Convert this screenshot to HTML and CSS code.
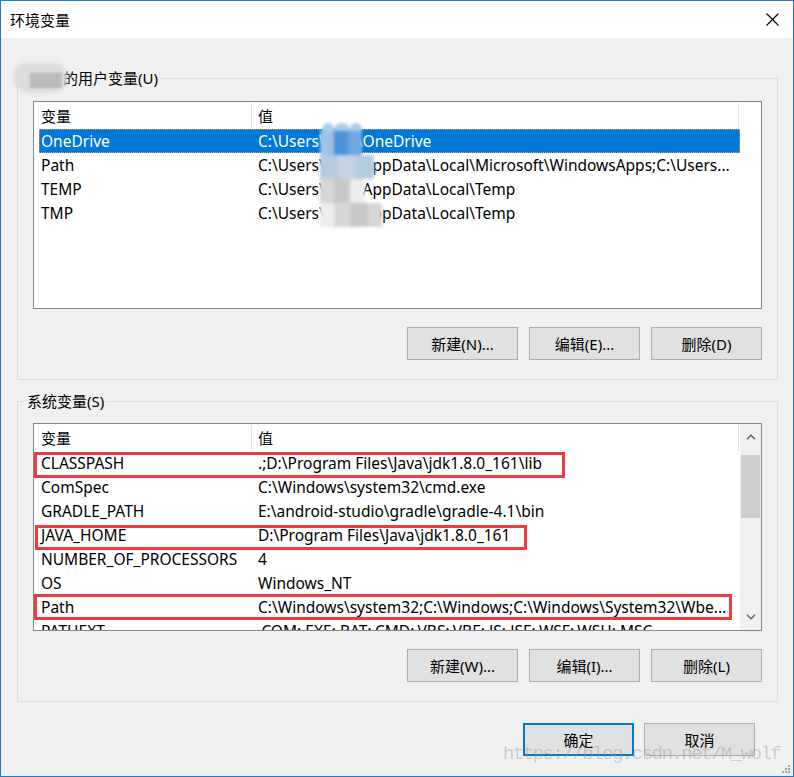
FILE: index.html
```html
<!DOCTYPE html>
<html lang="zh-CN">
<head>
<meta charset="utf-8">
<title>环境变量</title>
<link rel="stylesheet" href="styles.css">
</head>
<body>
<div class="window">
  <div class="titlebar">
    <span class="title">环境变量</span>
    <span class="close"><svg width="13" height="13" viewBox="0 0 13 13"><path d="M0.5 0.5 L12.5 12.5 M12.5 0.5 L0.5 12.5" stroke="#000" stroke-width="1.1" fill="none"/></svg></span>
  </div>
  <div class="content">
    <section class="group group-user">
      <div class="group-label"><span class="masked"></span>的用户变量(U)</div>
      <div class="list">
        <div class="list-main">
          <div class="list-head"><span class="hc hc1">变量</span><span class="hc hc2">值</span></div>
          <div class="row selected"><span class="c1">OneDrive</span><span class="c2">C:\Users\<span class="user"></span>\OneDrive</span></div>
          <div class="row"><span class="c1">Path</span><span class="c2">C:\Users\<span class="user"></span>\AppData\Local\Microsoft\WindowsApps;C:\Users...</span></div>
          <div class="row"><span class="c1">TEMP</span><span class="c2">C:\Users\<span class="user"></span>\AppData\Local\Temp</span></div>
          <div class="row"><span class="c1">TMP</span><span class="c2">C:\Users\<span class="user"></span>\AppData\Local\Temp</span></div>
        </div>
        <div class="noscroll"></div>
        <div class="mosaic">
          <div class="mz-row mz0"><i class="w4"></i><i class="w12 cA"></i><i class="w16 cA"></i><i class="w12 cA"></i></div>
          <div class="mz-row mz1"><i class="w2"></i><i class="w14 cD"></i><i class="w14 cB"></i><i class="w14 cC"></i></div>
          <div class="mz-row"><i class="w2"></i><i class="w18 cE"></i><i class="w18 cF"></i><i class="w18 cE"></i></div>
          <div class="mz-row"><i class="w2"></i><i class="w14 cH"></i><i class="w16 cG"></i><i class="w15 cW"></i></div>
          <div class="mz-row"><i class="w2"></i><i class="w14 cW"></i><i class="w16 cH"></i><i class="w18 cG"></i><i class="w14 cH"></i></div>
        </div>
      </div>
      <div class="btns">
        <button class="btn">新建(N)...</button>
        <button class="btn">编辑(E)...</button>
        <button class="btn">删除(D)</button>
      </div>
    </section>
    <section class="group group-sys">
      <div class="group-label">系统变量(S)</div>
      <div class="list">
        <div class="list-main">
          <div class="list-head"><span class="hc hc1">变量</span><span class="hc hc2">值</span></div>
          <div class="row"><span class="c1">CLASSPASH</span><span class="c2">.;D:\Program Files\Java\jdk1.8.0_161\lib</span></div>
          <div class="row"><span class="c1">ComSpec</span><span class="c2">C:\Windows\system32\cmd.exe</span></div>
          <div class="row"><span class="c1">GRADLE_PATH</span><span class="c2">E:\android-studio\gradle\gradle-4.1\bin</span></div>
          <div class="row"><span class="c1">JAVA_HOME</span><span class="c2">D:\Program Files\Java\jdk1.8.0_161</span></div>
          <div class="row"><span class="c1">NUMBER_OF_PROCESSORS</span><span class="c2">4</span></div>
          <div class="row"><span class="c1">OS</span><span class="c2">Windows_NT</span></div>
          <div class="row"><span class="c1">Path</span><span class="c2">C:\Windows\system32;C:\Windows;C:\Windows\System32\Wbe...</span></div>
          <div class="row"><span class="c1">PATHEXT</span><span class="c2">.COM;.EXE;.BAT;.CMD;.VBS;.VBE;.JS;.JSE;.WSF;.WSH;.MSC</span></div>
        </div>
        <div class="scrollbar">
          <div class="sb-btn"><svg width="10" height="6" viewBox="0 0 10 6"><path d="M1 5.2 L5 1.2 L9 5.2" stroke="#606060" stroke-width="1.3" fill="none"/></svg></div>
          <div class="sb-track"><div class="sb-thumb"></div></div>
          <div class="sb-btn"><svg width="10" height="6" viewBox="0 0 10 6"><path d="M1 0.8 L5 4.8 L9 0.8" stroke="#606060" stroke-width="1.3" fill="none"/></svg></div>
        </div>
        <div class="mark m1"></div>
        <div class="mark m2"></div>
        <div class="mark m3"></div>
      </div>
      <div class="btns">
        <button class="btn">新建(W)...</button>
        <button class="btn">编辑(I)...</button>
        <button class="btn">删除(L)</button>
      </div>
    </section>
    <div class="dialog-btns">
      <button class="btn btn-default">确定</button>
      <button class="btn">取消</button>
    </div>
  </div>
  <div class="watermark">https://blog.csdn.net/M_wolf</div>
  <svg class="grip" width="9" height="9" viewBox="0 0 9 9">
    <rect x="7" y="1" width="2" height="2" fill="#a0a0a0"/>
    <rect x="4" y="4" width="2" height="2" fill="#a0a0a0"/>
    <rect x="7" y="4" width="2" height="2" fill="#a0a0a0"/>
    <rect x="1" y="7" width="2" height="2" fill="#a0a0a0"/>
    <rect x="4" y="7" width="2" height="2" fill="#a0a0a0"/>
    <rect x="7" y="7" width="2" height="2" fill="#a0a0a0"/>
  </svg>
</div>
</body>
</html>
```
FILE: styles.css
```css
html, body {
  margin: 0;
  padding: 0;
  background: #ffffff;
}
body {
  font-family: "Noto Sans", "Noto Sans CJK SC", sans-serif;
  font-size: 15px;
  color: #000;
}
.window {
  position: relative;
  width: 794px;
  height: 777px;
  box-sizing: border-box;
  border: 1px solid #1c7cd5;
  background: #f0f0f0;
  display: flex;
  flex-direction: column;
  overflow: hidden;
}
.titlebar {
  flex: none;
  height: 37px;
  background: #fff;
  display: flex;
  align-items: center;
  justify-content: space-between;
  padding: 0 14px 0 9px;
}
.title {
  line-height: 20px;
}
.close {
  display: flex;
  align-items: center;
}
.content {
  display: flex;
  flex-direction: column;
  padding: 40px 15px 0 16px;
}
.group {
  border: 1px solid #dcdcdc;
  padding: 0 15px 19px;
  display: flex;
  flex-direction: column;
}
.group + .group {
  margin-top: 21px;
}
.group-label {
  align-self: flex-start;
  margin: -11px 0 0 -8px;
  padding: 0 2px;
  line-height: 20px;
  background: #f0f0f0;
  white-space: nowrap;
}
.masked {
  display: inline-block;
  width: 36px;
  height: 20px;
  vertical-align: top;
  position: relative;
}
.masked::before {
  content: "";
  position: absolute;
  left: -14px;
  top: -5px;
  width: 54px;
  height: 30px;
  border-radius: 14px;
  background: #dddcda;
  filter: blur(2px);
}
.masked::after {
  content: "";
  position: absolute;
  left: 3px;
  top: 5px;
  width: 32px;
  height: 15px;
  background: #bdbbb9;
  filter: blur(1px);
}
.list {
  position: relative;
  margin-top: 13px;
  height: 208px;
  box-sizing: border-box;
  border: 1px solid #828790;
  background: #fff;
  display: flex;
  overflow: hidden;
}
.group-sys .list {
  margin-top: 12px;
}
.list-main {
  flex: 1;
  min-width: 0;
  overflow: hidden;
}
.noscroll {
  flex: none;
  width: 21px;
}
.list-head {
  display: flex;
  height: 27px;
  margin: 0 1px 0 5px;
  align-items: flex-start;
}
.hc {
  box-sizing: border-box;
  height: 26px;
  margin-top: 1px;
  line-height: 26px;
  border-right: 1px solid #e5e5e5;
  white-space: nowrap;
}
.hc1 {
  flex: none;
  width: 213px;
  padding-left: 2px;
}
.hc2 {
  flex: 1;
  padding-left: 6px;
}
.row {
  display: flex;
  height: 24px;
  line-height: 24px;
  margin-left: 5px;
  white-space: nowrap;
  font-size: 15.5px;
}
.c1 {
  flex: none;
  width: 217px;
  box-sizing: border-box;
  padding-left: 2px;
  overflow: hidden;
}
.c2 {
  flex: 1;
  min-width: 0;
  padding-left: 2px;
  overflow: hidden;
  text-overflow: clip;
}
.user {
  display: inline-block;
  width: 32px;
}
.selected {
  background: #0078d7;
  color: #fff;
  outline: 1px dotted #d99a55;
  outline-offset: -1px;
}
.mosaic {
  position: absolute;
  left: 284px;
  top: 21px;
  width: 74px;
  display: flex;
  flex-direction: column;
  filter: blur(1.5px);
  pointer-events: none;
}
.mz-row {
  display: flex;
  height: 24px;
}
.mz0 { height: 8px; }
.mz0 i { border-radius: 8px 8px 0 0; }
.mz1 { height: 24px; }
.mz-row i { display: block; height: 100%; }
.w2 { width: 2px; }
.w4 { width: 4px; }
.w12 { width: 12px; }
.w14 { width: 14px; }
.w15 { width: 15px; }
.w16 { width: 16px; }
.w18 { width: 18px; }
.w20 { width: 20px; }
.cA { background: #a9cbea; }
.cB { background: #4a92da; }
.cC { background: #6fa8e2; }
.cD { background: #9fc2e6; }
.cE { background: #b7cbe0; }
.cF { background: #c5d3e2; }
.cG { background: #c8c8c8; }
.cH { background: #d6d6d6; }
.cW { background: #ececec; }
.scrollbar {
  flex: none;
  width: 21px;
  background: #f0f0f0;
  display: flex;
  flex-direction: column;
}
.sb-btn {
  flex: none;
  height: 26px;
  display: flex;
  align-items: center;
  justify-content: center;
}
.sb-track {
  flex: 1;
  padding-top: 5px;
}
.sb-thumb {
  height: 63px;
  margin: 0 1px;
  background: #cdcdcd;
}
.mark {
  position: absolute;
  box-sizing: border-box;
  border: 3px solid #ee3a3a;
  pointer-events: none;
}
.m1 { left: 0; top: 28px; width: 531px; height: 26px; }
.m2 { left: 1px; top: 101px; width: 492px; height: 25px; }
.m3 { left: 0; top: 170px; width: 698px; height: 26px; }
.btns {
  display: flex;
  justify-content: flex-end;
  gap: 11px;
  margin-top: 18px;
}
.btn {
  width: 111px;
  height: 33px;
  box-sizing: border-box;
  border: 1px solid #adadad;
  background: #e1e1e1;
  font-family: inherit;
  font-size: 15px;
  color: #000;
  padding: 0;
  margin: 0;
  display: flex;
  align-items: center;
  justify-content: center;
  line-height: 20px;
}
.btn-default {
  border: 2px solid #0078d7;
}
.dialog-btns {
  display: flex;
  justify-content: flex-end;
  gap: 10px;
  margin-top: 21px;
  padding-right: 23px;
}
.watermark {
  position: absolute;
  left: 502px;
  top: 741px;
  font-family: "Liberation Mono", monospace;
  font-size: 19px;
  letter-spacing: -1.5px;
  line-height: 24px;
  color: rgba(150, 150, 150, 0.42);
  white-space: nowrap;
  pointer-events: none;
}
.grip {
  position: absolute;
  right: 3px;
  bottom: 3px;
}
```
